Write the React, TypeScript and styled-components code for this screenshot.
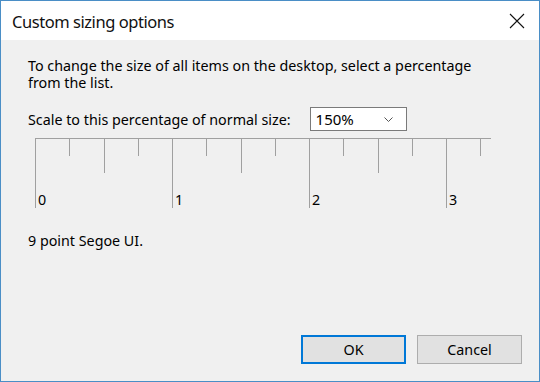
import React from "react";
import styled, { createGlobalStyle } from "styled-components";

const GlobalStyle = createGlobalStyle`
  html, body {
    margin: 0;
    padding: 0;
    background: #f0f0f0;
  }
  body {
    font-family: "Noto Sans", "Liberation Sans", sans-serif;
  }
`;

const Window = styled.div`
  box-sizing: border-box;
  width: 540px;
  height: 382px;
  border: 1px solid #4a8ec6;
  background: #f0f0f0;
  display: flex;
  flex-direction: column;
  color: #000;
`;

const TitleBar = styled.div`
  height: 38px;
  background: #fff;
  display: flex;
  align-items: center;
  justify-content: space-between;
  padding: 1px 14px 0 11px;
`;

const Title = styled.h1`
  margin: 0;
  font-size: 16.5px;
  font-weight: 400;
  letter-spacing: -0.45px;
  color: #111;
`;

const CloseButton = styled.button`
  border: 0;
  background: none;
  padding: 0;
  width: 16px;
  height: 16px;
  display: flex;
  color: #111;
`;

const Body = styled.div`
  flex: 1;
  display: flex;
  flex-direction: column;
  padding: 17px 17px 17px 27px;
  font-size: 14.3px;
  line-height: 17px;
`;

const Intro = styled.p`
  margin: 0;
  width: 460px;
`;

const ScaleRow = styled.div`
  display: flex;
  align-items: center;
  gap: 19px;
  margin-top: 16px;
`;

const Select = styled.div`
  box-sizing: border-box;
  width: 97px;
  height: 24px;
  border: 1px solid #7a7a7a;
  background: #fff;
  display: flex;
  align-items: center;
  justify-content: space-between;
  padding: 0 13px 0 5px;
  font-size: 15px;
`;

const Ruler = styled.svg`
  display: block;
  margin: 7px 0 0 7px;
  overflow: visible;
`;

const FontNote = styled.p`
  margin: 22px 0 0;
`;

const Footer = styled.div`
  margin-top: auto;
  display: flex;
  justify-content: flex-end;
  gap: 11px;
`;

const Button = styled.button<{ primary?: boolean }>`
  box-sizing: border-box;
  width: 105px;
  height: 29px;
  font-family: inherit;
  font-size: 14.3px;
  color: #000;
  background: #e1e1e1;
  border: ${(p) => (p.primary ? "2px solid #0078d7" : "1px solid #adadad")};
  padding: 0;
`;

const STEP = 34.25;
const ticks = Array.from({ length: 14 }, (_, k) => k);

const tickLength = (k: number) => (k % 4 === 0 ? 70 : k % 2 === 0 ? 35 : 18);

export default function App() {
  return (
    <>
      <GlobalStyle />
      <Window>
        <TitleBar>
          <Title>Custom sizing options</Title>
          <CloseButton aria-label="Close">
            <svg width="16" height="16" viewBox="0 0 16 16">
              <path d="M1 1 L15 15 M15 1 L1 15" stroke="currentColor" strokeWidth="1.1" />
            </svg>
          </CloseButton>
        </TitleBar>
        <Body>
          <Intro>
            To change the size of all items on the desktop, select a percentage from the list.
          </Intro>
          <ScaleRow>
            <span>Scale to this percentage of normal size:</span>
            <Select>
              <span>150%</span>
              <svg width="9" height="5" viewBox="0 0 9 5">
                <path d="M0.5 0.5 L4.5 4.5 L8.5 0.5" fill="none" stroke="#555" strokeWidth="1" />
              </svg>
            </Select>
          </ScaleRow>
          <Ruler width="460" height="72" viewBox="0 0 460 72">
            <line x1="0.5" y1="0.5" x2="456" y2="0.5" stroke="#a0a0a0" />
            {ticks.map((k) => {
              const x = Math.round(k * STEP) + 0.5;
              return (
                <line key={k} x1={x} y1="0" x2={x} y2={tickLength(k)} stroke="#a0a0a0" />
              );
            })}
            {[0, 1, 2, 3].map((n) => (
              <text
                key={n}
                x={Math.round(n * 4 * STEP) + 3}
                y="67"
                fontSize="14.3"
                fontFamily="Noto Sans, sans-serif"
                fill="#000"
              >
                {n}
              </text>
            ))}
          </Ruler>
          <FontNote>9 point Segoe UI.</FontNote>
          <Footer>
            <Button primary>OK</Button>
            <Button>Cancel</Button>
          </Footer>
        </Body>
      </Window>
    </>
  );
}
